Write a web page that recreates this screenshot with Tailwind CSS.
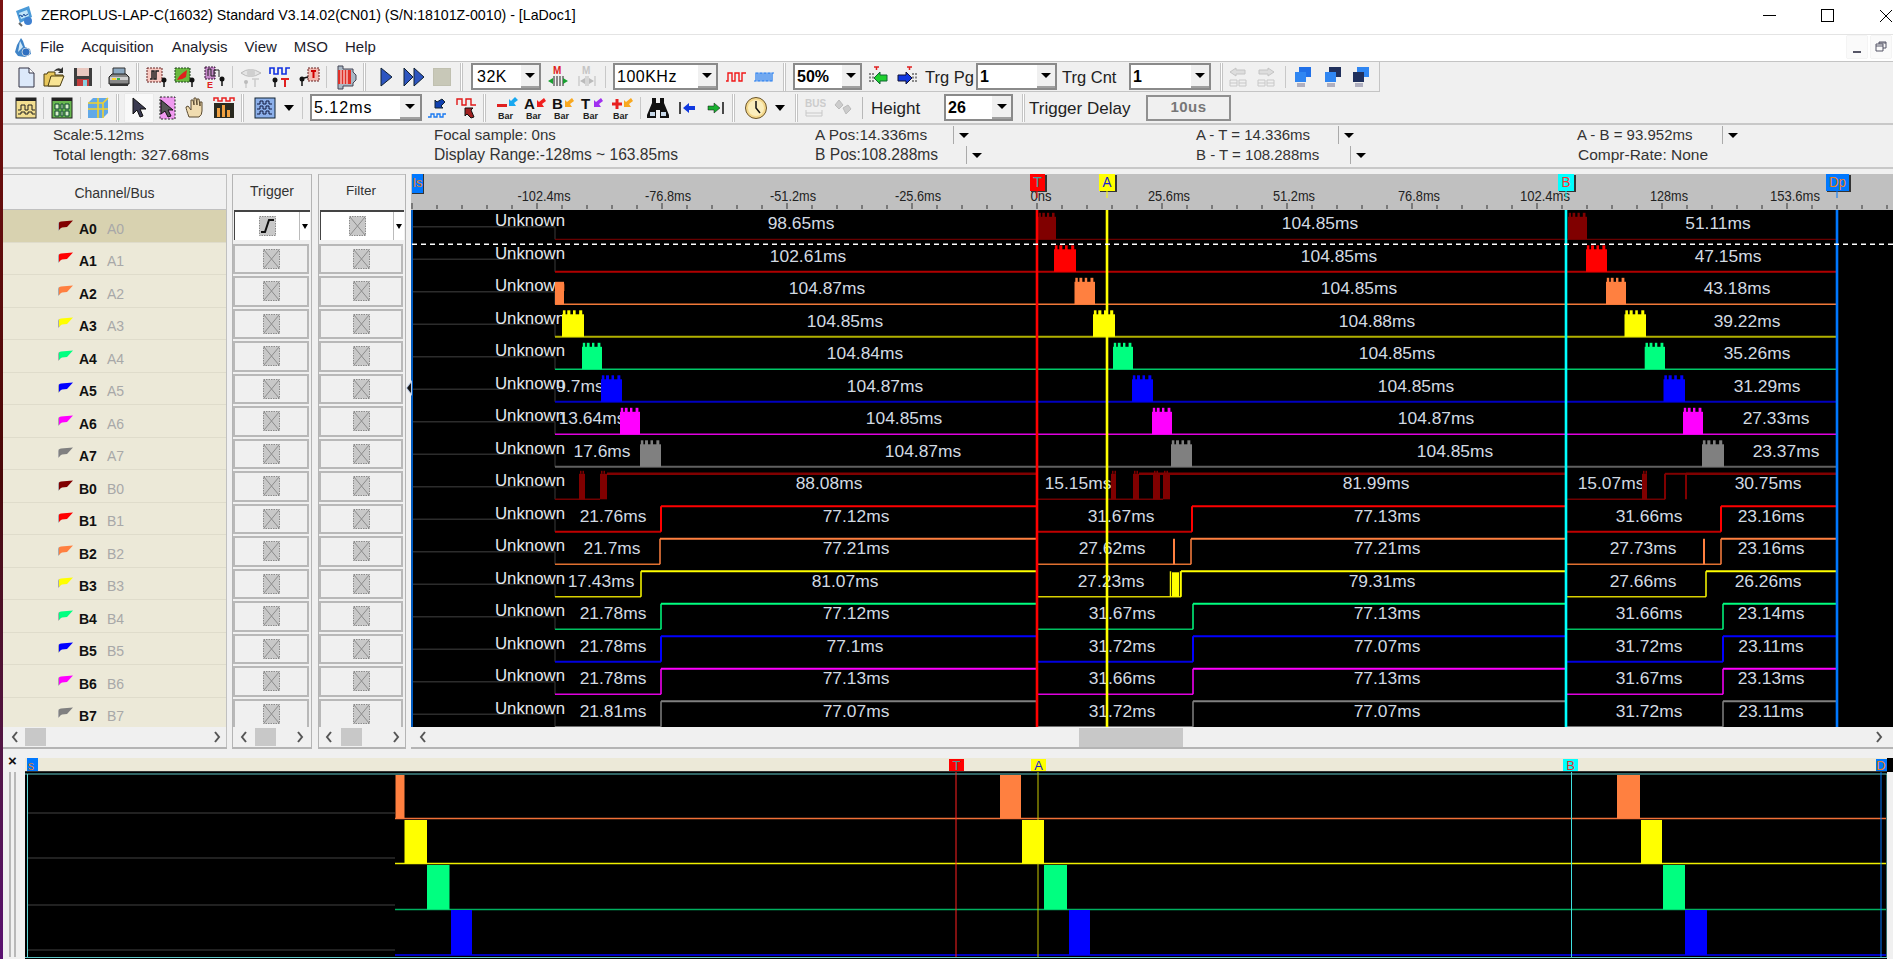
<!DOCTYPE html>
<html lang="en">
<head>
<meta charset="utf-8">
<title>ZEROPLUS-LAP-C</title>
<script src="https://cdn.jsdelivr.net/npm/@tailwindcss/browser@4"></script>
</head>
<body class="overflow-hidden bg-[#f0f0f0]">
<svg class="hidden" width="0" height="0"><defs>
<symbol id="xb" viewBox="0 0 17 20"><rect x=".5" y=".5" width="16" height="19" fill="#c8c8c8" stroke="#8a8a8a" stroke-dasharray="1.5 1"/><path d="M1 1l15 18M16 1L1 19" stroke="#8c8c8c" fill="none"/></symbol>
<symbol id="flag" viewBox="0 0 16 12"><path d="M1 4Q1 2 3 2L6 2 3 9 1 11z" fill="#aaa"/><path d="M2 3Q2 1.500 4 1.500L16 .5 10 7 5 7.500Q3 8 2 10z" fill="currentColor"/></symbol>
</defs></svg>
<div class="flex h-[959px] w-[1893px] overflow-hidden font-['Liberation_Sans',Arial,sans-serif] text-[#222]">
  <div class="h-full w-[3px] shrink-0 bg-linear-to-b from-[#7a1212] via-[#4a0808] to-[#5a1070]"></div>
  <div class="flex h-full w-[1890px] shrink-0 flex-col">

    <!-- title bar -->
    <div class="flex h-[35px] shrink-0 items-center border-b border-[#e4e4e4] bg-white">
      <svg class="ml-[11px] mt-[-2px] h-[22px] w-[22px]" viewBox="0 0 22 22"><path d="M2 6l13-5 3 11-12 6z" fill="#4a9ad8"/><path d="M5 8l8-3 2 6-8 3z" fill="#bfe4f8"/><path d="M5 11l2-1 1 2 2-3 1 2 3-2" stroke="#1c4f9c" fill="none"/><circle cx="14" cy="16" r="4" fill="#3d7fd0"/><path d="M5 18l3 3" stroke="#666" stroke-width="2"/></svg>
      <span class="ml-[5px] mt-[-2px] whitespace-nowrap text-[14.2px] text-black">ZEROPLUS-LAP-C(16032) Standard V3.14.02(CN01) (S/N:18101Z-0010) - [LaDoc1]</span>
      <div class="ml-auto flex h-full">
        <div class="flex w-[58px] items-center justify-center"><i class="mt-[-3px] block h-px w-[13px] bg-black"></i></div>
        <div class="flex w-[58px] items-center justify-center"><i class="mt-[-3px] block h-[13px] w-[13px] border border-black"></i></div>
        <div class="flex w-[37px] items-center"><svg class="ml-[23px] mt-[-3px] h-[14px] w-[14px]" viewBox="0 0 14 14"><path d="M1 1l12 12M13 1L1 13" stroke="#000" fill="none"/></svg></div>
      </div>
    </div>

    <!-- menu -->
    <div class="flex h-[26px] shrink-0 items-center bg-white pb-[2px] text-[15px] text-[#1c1c2c]">
      <svg class="ml-[10px] h-[21px] w-[20px]" viewBox="0 0 20 21"><path d="M8 1L4 8 2 15l3 4 7 1 6-3-1-5-5-2-2-6z" fill="#3f84c8"/><path d="M7 4l3 6-5 5z" fill="#cfe8f8"/><circle cx="13" cy="15" r="4" fill="#2f6fc0" stroke="#bcd" /></svg>
      <span class="ml-[7px]">File</span><span class="ml-[17px]">Acquisition</span><span class="ml-[18px]">Analysis</span><span class="ml-[17px]">View</span><span class="ml-[17px]">MSO</span><span class="ml-[17px]">Help</span>
      <div class="ml-auto mr-[2px] flex gap-[4px]">
        <div class="flex h-[22px] w-[20px] items-end justify-center bg-[#fafafa] pb-[5px] shadow-[0_0_1px_#bbb]"><i class="block h-[2px] w-[8px] bg-[#556]"></i></div>
        <div class="flex h-[22px] w-[20px] items-center justify-center bg-[#fafafa] shadow-[0_0_1px_#bbb]"><svg class="h-[12px] w-[12px]" viewBox="0 0 12 12"><path d="M4 3V1h7v6H8M1 3h7v7H1zM1 5h7M4 2h7" stroke="#556" fill="none"/></svg></div>
      </div>
    </div>

    <!-- toolbar 1 -->
    <div class="h-[31px] shrink-0 border-t border-[#c4c4c4]">
    <div class="flex h-[30px] w-[1377px] items-center border-r border-b border-[#c4c4c4] bg-[#f0f0f0] pl-[9px]">
      <div class="flex w-[28px] justify-center"><svg class="h-[24px] w-[24px]" viewBox="0 0 24 24"><path d="M5 3h10l5 5v14H5z" fill="#dce9fa" stroke="#334"/><path d="M15 3v5h5" fill="#fff" stroke="#334"/></svg></div>
      <div class="flex w-[28px] justify-center"><svg class="h-[24px] w-[24px]" viewBox="0 0 24 24"><path d="M2 21V9h3l1-2h7v3h8l-4 11z" fill="#e9c85c" stroke="#4a3c10"/><path d="M6 21l3-10h13l-4 10z" fill="#f8e494" stroke="#4a3c10"/><path d="M12 6q3-4 7-2l2-2v6h-5l2-2q-3-1-5 0" fill="#333"/></svg></div>
      <div class="ml-px flex w-[28px] justify-center"><svg class="h-[24px] w-[24px]" viewBox="0 0 24 24"><rect x="3" y="3" width="18" height="18" fill="#3e3e3e"/><rect x="6" y="3" width="12" height="8" fill="#e9c8c0"/><rect x="6" y="14" width="12" height="7" fill="#c43c3c"/><rect x="12" y="15" width="4" height="6" fill="#8cd0e0"/></svg></div>
      <i class="ml-[3px] block h-[22px] w-px bg-[#c8c8c8]"></i>
      <div class="ml-[4px] flex w-[28px] justify-center"><svg class="h-[24px] w-[24px]" viewBox="0 0 24 24"><path d="M6 11V3h12v8z" fill="#8ca8c0" stroke="#333"/><path d="M2 12l3-3h14l3 3v7H2z" fill="#888" stroke="#222"/><rect x="3" y="12" width="18" height="3" fill="#cfcfcf"/><rect x="5" y="13" width="4" height="2" fill="#ffd52e"/><rect x="10" y="13" width="3" height="2" fill="#37b34a"/><path d="M3 19h18v2H3z" fill="#333"/></svg></div>
      <i class="ml-[3px] block h-[28px] w-[3px] border-x border-[#c4c4c4] bg-white"></i>
      <div class="ml-[4px] flex w-[28px] justify-center"><svg class="h-[24px] w-[24px]" viewBox="0 0 24 24"><rect x="2" y="3" width="15" height="14" fill="#f8c8c0" stroke="#622" stroke-dasharray="2 1"/><path d="M5 14h2V6h2v8h2V6h3" stroke="#222" fill="none" stroke-width="1.500"/><circle cx="19" cy="15" r="2.500" fill="#111"/><path d="M19 16v6" stroke="#111" stroke-width="1.500"/></svg></div>
      <div class="flex w-[28px] justify-center"><svg class="h-[24px] w-[24px]" viewBox="0 0 24 24"><rect x="2" y="3" width="15" height="14" fill="#69b93e" stroke="#242" stroke-dasharray="2 1"/><path d="M4 15q3-6 10-10l-1 7q-4 3-9 3z" fill="#e0201c"/><circle cx="19" cy="15" r="2.500" fill="#111"/><path d="M19 16v6" stroke="#111" stroke-width="1.500"/></svg></div>
      <div class="ml-[2px] flex w-[28px] justify-center"><svg class="h-[24px] w-[24px]" viewBox="0 0 24 24"><rect x="2" y="2" width="10" height="12" fill="#c488c8" stroke="#313" stroke-dasharray="2 1"/><path d="M5 11V4h3v7h3V5h5v7" stroke="#222" fill="none"/><circle cx="19" cy="14" r="2.500" fill="#111"/><path d="M19 15v6" stroke="#111" stroke-width="1.500"/><text x="4" y="23" font-size="9" font-weight="700" fill="#e02020">E</text></svg></div>
      <i class="ml-[3px] block h-[22px] w-px bg-[#c8c8c8]"></i>
      <div class="ml-[4px] flex w-[28px] justify-center"><svg class="h-[24px] w-[24px]" viewBox="0 0 24 24"><path d="M2 8q9-7 20 0-11 7-20 0z" fill="#e4e4e4" stroke="#bbb"/><circle cx="12" cy="8" r="4" fill="#cfcfcf"/><circle cx="7" cy="17" r="2" fill="#bbb"/><path d="M7 17v6" stroke="#bbb"/><path d="M13 14h7M16 14v8" stroke="#ccc" stroke-width="1.500" fill="none"/></svg></div>
      <div class="ml-px flex w-[28px] justify-center"><svg class="h-[24px] w-[24px]" viewBox="0 0 24 24"><path d="M2 9V3h4v6h4V3h4v6h4V3h4" stroke="#1030e0" stroke-width="1.600" fill="none"/><circle cx="7" cy="15" r="2.500" fill="#111"/><path d="M7 15v7" stroke="#111" stroke-width="1.500"/><path d="M13 14h8M17 14v8" stroke="#e02020" stroke-width="2" fill="none"/></svg></div>
      <div class="flex w-[28px] justify-center"><svg class="h-[24px] w-[24px]" viewBox="0 0 24 24"><rect x="12" y="3" width="11" height="13" fill="#f2b8b0" stroke="#622" stroke-dasharray="2 1"/><path d="M15 6h5M17.500 6v7" stroke="#d00000" stroke-width="2" fill="none"/><circle cx="6" cy="14" r="2.500" fill="#111"/><path d="M6 15v6M8 13l4-1" stroke="#111" stroke-width="1.500"/></svg></div>
      <i class="ml-[4px] block h-[22px] w-px bg-[#c8c8c8]"></i>
      <div class="ml-[5px] flex w-[28px] justify-center"><svg class="h-[26px] w-[26px]" viewBox="0 0 26 26"><path d="M5 2h5v3h10v3l3 3v5l-3 3v3H10v3H5z" fill="#aab8c4" stroke="#445"/><rect x="5" y="6" width="13" height="14" fill="#e03028"/><path d="M8 6v14M11 6v14M14 6v14" stroke="#fff"/></svg></div>
      <i class="ml-[3px] block h-[28px] w-[3px] border-x border-[#c4c4c4] bg-white"></i>
      <div class="ml-[6px] flex w-[28px] justify-center"><svg class="h-[20px] w-[16px]" viewBox="0 0 16 20"><path d="M3 1l11 9-11 9z" fill="#2d55c0" stroke="#123"/></svg></div>
      <div class="flex w-[28px] justify-center"><svg class="h-[20px] w-[24px]" viewBox="0 0 24 20"><path d="M2 1l9 9-9 9zM12 1l10 9-10 9z" fill="#2d55c0" stroke="#123"/></svg></div>
      <div class="flex w-[28px] justify-center"><i class="block h-[18px] w-[18px] border border-[#c0c0b0] bg-[#c8c8b8]"></i></div>
      <i class="ml-[4px] block h-[28px] w-[3px] border-x border-[#c4c4c4] bg-white"></i>
      <div class="ml-[8px] flex h-[27px] w-[70px] items-center border-2 border-[#8a8a8a] bg-white"><span class="ml-[4px] text-[16px] tracking-[.5px] text-black">32K</span><div class="ml-auto flex h-full w-[18px] items-center justify-center border-b-2 border-[#a0a0a0] bg-[#f0f0f0]"><i class="block border-x-[5px] border-t-[5px] border-x-transparent border-t-black"></i></div></div>
      <div class="ml-[3px] flex w-[28px] justify-center"><svg class="h-[24px] w-[24px]" viewBox="0 0 24 24"><text x="7" y="9" font-size="10" font-weight="700" fill="#e02020">M</text><path d="M8 11v10M11 11v10M14 11v10M17 11v10" stroke="#222"/><path d="M2 16l5-3v6zM22 16l-5-3v6z" fill="#18a030"/></svg></div>
      <div class="ml-[1px] flex w-[28px] justify-center"><svg class="h-[24px] w-[24px]" viewBox="0 0 24 24"><text x="7" y="9" font-size="10" font-weight="700" fill="#c4c4c4">M</text><path d="M4 11v10M20 11v10M11 11v10M13 11v10" stroke="#bbb"/><path d="M5 16l5-3v6zM19 16l-5-3v6z" fill="#bbb"/></svg></div>
      <i class="ml-[4px] block h-[22px] w-px bg-[#c8c8c8]"></i>
      <div class="ml-[7px] flex h-[27px] w-[105px] items-center border-2 border-[#8a8a8a] bg-white"><span class="ml-[2px] text-[16px] tracking-[.5px] text-black">100KHz</span><div class="ml-auto flex h-full w-[18px] items-center justify-center border-b-2 border-[#a0a0a0] bg-[#f0f0f0]"><i class="block border-x-[5px] border-t-[5px] border-x-transparent border-t-black"></i></div></div>
      <div class="ml-[4px] flex w-[28px] justify-center"><svg class="h-[14px] w-[20px]" viewBox="0 0 20 14"><path d="M0 11h2V3h4v8h3V3h4v8h3V3h4" stroke="#f01818" stroke-width="1.400" fill="none"/></svg></div>
      <div class="flex w-[28px] justify-center"><svg class="h-[14px] w-[20px]" viewBox="0 0 20 14"><path d="M0 11h2V3h2v8h2V3h2v8h2V3h2v8h2V3h2v8h2V3h2" stroke="#1c78f0" stroke-width="1.200" fill="none"/></svg></div>
      <i class="ml-[5px] block h-[28px] w-[3px] border-x border-[#c4c4c4] bg-white"></i>
      <div class="ml-[7px] flex h-[27px] w-[69px] items-center border-2 border-[#8a8a8a] bg-white"><span class="ml-[2px] text-[16px] font-bold text-black">50%</span><div class="ml-auto flex h-full w-[18px] items-center justify-center border-b-2 border-[#a0a0a0] bg-[#f0f0f0]"><i class="block border-x-[5px] border-t-[5px] border-x-transparent border-t-black"></i></div></div>
      <div class="ml-[2px] flex w-[28px] justify-center"><svg class="h-[24px] w-[24px]" viewBox="0 0 24 24"><path d="M8 2h5M10.500 2v3" stroke="#e02020" stroke-width="1.500"/><path d="M4 8v10M7 8v10" stroke="#222" stroke-dasharray="2 1.500"/><path d="M8 13l6-6v3h7v6h-7v3z" fill="#20d030" stroke="#163"/></svg></div>
      <div class="ml-px flex w-[28px] justify-center"><svg class="h-[24px] w-[24px]" viewBox="0 0 24 24"><path d="M12 2h5M14.500 2v3" stroke="#e02020" stroke-width="1.500"/><path d="M18 8v10M21 8v10" stroke="#222" stroke-dasharray="2 1.500"/><path d="M17 13l-6-6v3H3v6h8v3z" fill="#1038e0" stroke="#113"/></svg></div>
      <span class="ml-[4px] mt-[2px] w-[51px] whitespace-nowrap text-[16.5px]">Trg Pg</span>
      <div class="flex h-[27px] w-[81px] items-center border-2 border-[#8a8a8a] bg-white"><span class="ml-[2px] text-[16px] font-bold text-black">1</span><div class="ml-auto flex h-full w-[18px] items-center justify-center border-b-2 border-[#a0a0a0] bg-[#f0f0f0]"><i class="block border-x-[5px] border-t-[5px] border-x-transparent border-t-black"></i></div></div>
      <span class="ml-[5px] mt-[2px] w-[56px] whitespace-nowrap text-[16.5px]">Trg Cnt</span>
      <div class="ml-[11px] flex h-[27px] w-[82px] items-center border-2 border-[#8a8a8a] bg-white"><span class="ml-[2px] text-[16px] font-bold text-black">1</span><div class="ml-auto flex h-full w-[18px] items-center justify-center border-b-2 border-[#a0a0a0] bg-[#f0f0f0]"><i class="block border-x-[5px] border-t-[5px] border-x-transparent border-t-black"></i></div></div>
      <i class="ml-[9px] block h-[28px] w-[3px] border-x border-[#c4c4c4] bg-white"></i>
      <div class="ml-px flex w-[28px] justify-center"><svg class="h-[22px] w-[22px]" viewBox="0 0 22 22"><path d="M3 6l6-4v2h9v4H9v2z" fill="#ddd" stroke="#c4c4c4"/><path d="M3 14h7v6H3zM12 14h7v6h-7zM3 17h7M12 17h7" stroke="#c8c8c8" fill="none"/></svg></div>
      <div class="flex w-[28px] justify-center"><svg class="h-[22px] w-[22px]" viewBox="0 0 22 22"><path d="M19 6l-6-4v2H4v4h9v2z" fill="#ddd" stroke="#c4c4c4"/><path d="M3 14h7v6H3zM12 14h7v6h-7zM3 17h7M12 17h7" stroke="#c8c8c8" fill="none"/></svg></div>
      <i class="ml-[5px] block h-[22px] w-px bg-[#c8c8c8]"></i>
      <div class="ml-[3px] flex w-[28px] justify-center"><svg class="h-[22px] w-[18px]" viewBox="0 0 18 22"><rect x="5" y="1" width="12" height="10" fill="#2070e8"/><rect x="1" y="6" width="11" height="10" fill="#2f86f2"/><path d="M3 17h8v4H3z" fill="#b0b0c0"/></svg></div>
      <div class="ml-[2px] flex w-[28px] justify-center"><svg class="h-[22px] w-[18px]" viewBox="0 0 18 22"><rect x="5" y="1" width="12" height="10" fill="#20305c"/><rect x="1" y="6" width="11" height="10" fill="#2f86f2"/><path d="M3 17h8v4H3z" fill="#b0b0c0"/></svg></div>
      <div class="flex w-[28px] justify-center"><svg class="h-[22px] w-[18px]" viewBox="0 0 18 22"><rect x="5" y="1" width="12" height="10" fill="#2f86f2"/><rect x="1" y="6" width="11" height="10" fill="#20305c"/><path d="M3 17h8v4H3z" fill="#b0b0c0"/></svg></div>
    </div></div>

    <!-- toolbar 2 -->
    <div class="flex h-[31px] shrink-0 items-center bg-[#f0f0f0] pl-[9px]">
      <div class="flex w-[28px] justify-center"><svg class="h-[24px] w-[24px]" viewBox="0 0 24 24"><rect x="2" y="2" width="20" height="20" fill="#f2de90" stroke="#222"/><rect x="2" y="2" width="20" height="3" fill="#222"/><path d="M4 14h3V9h4v5h3V9h4v5h3M4 18h3v-2h4v2h3v-2h4v2h3" stroke="#222" fill="none"/></svg></div>
      <i class="ml-[3px] block h-[22px] w-px bg-[#c8c8c8]"></i>
      <div class="ml-[4px] flex w-[28px] justify-center"><svg class="h-[24px] w-[24px]" viewBox="0 0 24 24"><rect x="2" y="2" width="20" height="20" fill="#68b850" stroke="#222"/><rect x="2" y="2" width="20" height="3" fill="#222"/><path d="M5 8h4v5H5zM11 8h2v5h-2zM15 8h4v5h-4zM5 15h4v5H5zM11 15h2v5h-2zM15 15h4v5h-4z" fill="#d8f0c8" stroke="#143"/></svg></div>
      <i class="ml-[4px] block h-[22px] w-px bg-[#c8c8c8]"></i>
      <div class="ml-[3px] flex w-[28px] justify-center"><svg class="h-[24px] w-[24px]" viewBox="0 0 24 24"><path d="M2 7l5-5h15v15l-5 5H2z" fill="#60a8e8"/><path d="M2 13h20M12 2v20M2 7h15v15M17 7l5-5" stroke="#f0d030" stroke-width="1.600" fill="none"/></svg></div>
      <i class="ml-[4px] block h-[28px] w-[3px] border-x border-[#c4c4c4] bg-white"></i>
      <div class="ml-[6px] flex h-[28px] w-[28px] items-center justify-center bg-[#f9f9f9] shadow-[0_0_1px_#ccc]"><svg class="h-[22px] w-[16px]" viewBox="0 0 16 22"><path d="M2 1v16l4-4 3 7 3-1-3-7h6z" fill="#3a3a50" stroke="#111"/></svg></div>
      <div class="flex w-[28px] justify-center"><svg class="h-[24px] w-[24px]" viewBox="0 0 24 24"><rect x="5" y="1" width="15" height="22" fill="#f09af0" stroke="#222" stroke-dasharray="2 1.500"/><path d="M6 4v14l4-3 3 6 3-1-3-6h5z" fill="#555" stroke="#111"/></svg></div>
      <div class="ml-px flex w-[28px] justify-center"><svg class="h-[24px] w-[24px]" viewBox="0 0 24 24"><path d="M5 21Q2 13 2 11l2-1 3 4V4h2l1 5V2h2l1 7V3h2l1 7V6h2v9q0 4-3 6z" fill="#f0dcb0" stroke="#5a4a30"/></svg></div>
      <div class="flex w-[28px] justify-center"><svg class="h-[24px] w-[24px]" viewBox="0 0 24 24"><path d="M2 5V2h4v3h4V2h4v3h4V2h4v3" stroke="#e82020" stroke-width="1.500" fill="none"/><rect x="2" y="7" width="20" height="15" fill="#2a2a20"/><path d="M5 21h3V12H5zM10 21h3V9h-3zM15 21h3v-7h-3z" fill="#f0a040"/></svg></div>
      <i class="ml-[3px] block h-[28px] w-[3px] border-x border-[#c4c4c4] bg-white"></i>
      <div class="ml-[7px] flex w-[28px] justify-center"><svg class="h-[24px] w-[24px]" viewBox="0 0 24 24"><rect x="2" y="2" width="20" height="20" fill="#8cb0ea" stroke="#123"/><path d="M4 8h3V5h3v3h3V5h3v3h3M4 13h3v-3h3v3h3v-3h3v3h3M4 18h3v-3h3v3h3v-3h3v3h3" stroke="#121a40" fill="none"/></svg></div>
      <div class="flex w-[20px] justify-center"><i class="block border-x-[5px] border-t-[6px] border-x-transparent border-t-black"></i></div>
      <i class="ml-[3px] block h-[22px] w-px bg-[#c8c8c8]"></i>
      <div class="ml-[7px] flex h-[27px] w-[112px] items-center border-2 border-[#8a8a8a] bg-white"><span class="ml-[2px] text-[16px] tracking-[1px] text-black">5.12ms</span><div class="ml-auto flex h-full w-[20px] items-center justify-center border-b-2 border-[#a0a0a0] bg-[#f0f0f0]"><i class="block border-x-[5px] border-t-[5px] border-x-transparent border-t-black"></i></div></div>
      <div class="ml-[2px] flex w-[28px] justify-center"><svg class="h-[24px] w-[24px]" viewBox="0 0 24 24"><path d="M2 21h3v-3h3v3h3v-3h3v3h3v-3h3" stroke="#1878f0" stroke-width="1.300" fill="none"/><path d="M16 3l3 3-4 4 2 2h-8V4l2 2z" fill="#1040b0" stroke="#123"/></svg></div>
      <div class="ml-px flex w-[28px] justify-center"><svg class="h-[24px] w-[24px]" viewBox="0 0 24 24"><path d="M2 9V3h5v6h4V3h5v6h5" stroke="#e01818" stroke-width="1.400" fill="none"/><path d="M19 21l-3 1-4-4-2 2v-8h8l-2 2z" fill="#a02020" stroke="#111"/></svg></div>
      <i class="ml-[2px] block h-[28px] w-[3px] border-x border-[#c4c4c4] bg-white"></i>
      <div class="ml-[7px] flex w-[28px] justify-center"><svg class="h-[26px] w-[24px]" viewBox="0 0 24 26"><path d="M2 9h10v3H2z" fill="#e02020"/><path d="M20 2l3 3-4 3 2 3h-7V4l2 2z" fill="#18a8f0"/><text x="3" y="24" font-size="9" fill="#222" font-weight="700">Bar</text></svg></div>
      <div class="flex w-[28px] justify-center"><svg class="h-[26px] w-[24px]" viewBox="0 0 24 26"><text x="1" y="14" font-size="15" font-weight="700" fill="#111">A</text><path d="M21 3l2 3-4 3 2 3h-7V5l2 2z" fill="#f02020"/><text x="3" y="24" font-size="9" fill="#222" font-weight="700">Bar</text></svg></div>
      <div class="flex w-[28px] justify-center"><svg class="h-[26px] w-[24px]" viewBox="0 0 24 26"><text x="1" y="14" font-size="15" font-weight="700" fill="#111">B</text><path d="M21 3l2 3-4 3 2 3h-7V5l2 2z" fill="#f8a820"/><text x="3" y="24" font-size="9" fill="#222" font-weight="700">Bar</text></svg></div>
      <div class="ml-px flex w-[28px] justify-center"><svg class="h-[26px] w-[24px]" viewBox="0 0 24 26"><text x="1" y="14" font-size="15" font-weight="700" fill="#111">T</text><path d="M21 3l2 3-4 3 2 3h-7V5l2 2z" fill="#a030f0"/><text x="3" y="24" font-size="9" fill="#222" font-weight="700">Bar</text></svg></div>
      <div class="ml-[2px] flex w-[28px] justify-center"><svg class="h-[26px] w-[24px]" viewBox="0 0 24 26"><path d="M2 9h10M7 4v10" stroke="#e82020" stroke-width="3"/><path d="M21 3l2 3-4 3 2 3h-7V5l2 2z" fill="#f8a820"/><text x="3" y="24" font-size="9" fill="#222" font-weight="700">Bar</text></svg></div>
      <i class="ml-[4px] block h-[22px] w-px bg-[#c8c8c8]"></i>
      <div class="ml-[3px] flex w-[28px] justify-center"><svg class="h-[22px] w-[24px]" viewBox="0 0 24 22"><path d="M6 1h4v5h4V1h4v5l5 12v3h-9v-8h-4v8H1v-3L6 6z" fill="#111"/><path d="M4 15h5v4H4zM15 15h5v4h-5z" fill="#c8d8e8"/></svg></div>
      <div class="ml-px flex w-[28px] justify-center"><svg class="h-[18px] w-[18px]" viewBox="0 0 18 18"><path d="M2 3v12" stroke="#111" stroke-width="1.500"/><path d="M5 9l6-5v3h6v4h-6v3z" fill="#1038e0"/></svg></div>
      <div class="ml-px flex w-[28px] justify-center"><svg class="h-[18px] w-[18px]" viewBox="0 0 18 18"><path d="M16 3v12" stroke="#111" stroke-width="1.500"/><path d="M13 9L7 4v3H1v4h6v3z" fill="#18b030" stroke="#111" stroke-width=".5"/></svg></div>
      <i class="ml-[2px] block h-[28px] w-[3px] border-x border-[#c4c4c4] bg-white"></i>
      <div class="ml-[7px] flex w-[28px] justify-center"><svg class="h-[24px] w-[24px]" viewBox="0 0 24 24"><circle cx="12" cy="12" r="10.500" fill="#f4d88c" stroke="#6a5428"/><circle cx="12" cy="12" r="8" fill="#fbeebc"/><path d="M12 5v7l4 5" stroke="#111" stroke-width="1.500" fill="none"/></svg></div>
      <div class="flex w-[20px] justify-center"><i class="block border-x-[5px] border-t-[6px] border-x-transparent border-t-black"></i></div>
      <i class="ml-[5px] block h-[28px] w-[3px] border-x border-[#c4c4c4] bg-white"></i>
      <div class="ml-[2px] flex w-[28px] justify-center"><svg class="h-[24px] w-[24px]" viewBox="0 0 24 24"><text x="3" y="11" font-size="10" font-weight="700" fill="#ccc">BUS</text><path d="M4 14v6M20 14v6M4 17h16M4 20h16" stroke="#c8c8c8" fill="none"/></svg></div>
      <div class="ml-px flex w-[28px] justify-center"><svg class="h-[24px] w-[24px]" viewBox="0 0 24 24"><path d="M4 9l4-5 4 5-4 4zM12 12l5-3 3 4-5 5z" fill="#ccc" stroke="#bbb"/></svg></div>
      <i class="ml-[5px] block h-[22px] w-px bg-[#b8b8b8]"></i>
      <span class="ml-[8px] mt-[2px] w-[50px] text-[17px]">Height</span>
      <div class="ml-[23px] flex h-[27px] w-[69px] items-center border-2 border-[#8a8a8a] bg-white"><span class="ml-[2px] text-[16px] font-bold text-black">26</span><div class="ml-auto flex h-full w-[19px] items-center justify-center border-b-2 border-[#a0a0a0] bg-[#f0f0f0]"><i class="block border-x-[5px] border-t-[5px] border-x-transparent border-t-black"></i></div></div>
      <i class="ml-[9px] block h-[28px] w-[3px] border-x border-[#c4c4c4] bg-white"></i>
      <span class="ml-[4px] mt-[2px] w-[105px] whitespace-nowrap text-[17px]">Trigger Delay</span>
      <div class="ml-[12px] flex h-[26px] w-[85px] items-center justify-center border-2 border-[#909090] bg-[#f0f0f0] text-[15px] font-bold tracking-[.5px] text-[#777]">10us</div>
    </div>

    <!-- info -->
    <div class="grid h-[46px] shrink-0 grid-cols-[381px_381px_381px_381px_381px] border-y-2 border-[#c8c8c8] bg-[#f0f0f0] pl-[50px] text-[15px] leading-[20px] text-[#333]">
      <div><div>Scale:5.12ms</div><div class="text-[15.5px]">Total length: 327.68ms</div></div>
      <div><div>Focal sample: 0ns</div><div class="text-[15.6px]">Display Range:-128ms ~ 163.85ms</div></div>
      <div>
        <div class="flex items-center"><span class="w-[138px] text-[15.4px]">A Pos:14.336ms</span><i class="block h-[18px] w-px bg-[#aaa]"></i><i class="ml-[5px] block border-x-[5px] border-t-[5px] border-x-transparent border-t-black"></i></div>
        <div class="flex items-center"><span class="w-[151px] text-[15.6px]">B Pos:108.288ms</span><i class="block h-[18px] w-px bg-[#aaa]"></i><i class="ml-[5px] block border-x-[5px] border-t-[5px] border-x-transparent border-t-black"></i></div>
      </div>
      <div>
        <div class="flex items-center"><span class="w-[142px]">A - T = 14.336ms</span><i class="block h-[18px] w-px bg-[#aaa]"></i><i class="ml-[5px] block border-x-[5px] border-t-[5px] border-x-transparent border-t-black"></i></div>
        <div class="flex items-center"><span class="w-[154px]">B - T = 108.288ms</span><i class="block h-[18px] w-px bg-[#aaa]"></i><i class="ml-[5px] block border-x-[5px] border-t-[5px] border-x-transparent border-t-black"></i></div>
      </div>
      <div>
        <div class="flex items-center"><span class="w-[145px]">A - B = 93.952ms</span><i class="block h-[18px] w-px bg-[#aaa]"></i><i class="ml-[5px] block border-x-[5px] border-t-[5px] border-x-transparent border-t-black"></i></div>
        <div class="ml-px text-[15.5px]">Compr-Rate: None</div>
      </div>
    </div>
    <div class="h-[5px] shrink-0 bg-[#f0f0f0]"></div>

    <!-- main panels -->
    <div class="flex h-[575px] shrink-0 bg-[#f0f0f0]">
      <div class="flex w-[224px] shrink-0 flex-col border-b-2 border-[#b4b4b4]">
        <div class="flex h-[36px] shrink-0 items-center justify-center border-y border-r border-[#c0c0c0] pt-[2px] text-[14px] text-[#333]">Channel/Bus</div>
        <div id="chan" class="h-[517px] shrink-0 overflow-hidden border-r border-[#c0c0c0] bg-[#ece9d8]"></div>
        <div class="flex flex-1 items-center border-r border-[#c0c0c0] pl-[8px] text-[#555]"><svg class="h-[12px] w-[8px]" viewBox="0 0 8 12"><path d="M6 1L2 6l4 5" stroke="#555" stroke-width="2" fill="none"/></svg><i class="ml-[6px] block h-[18px] w-[21px] bg-[#c8c8c8]"></i><svg class="ml-[167px] h-[12px] w-[8px]" viewBox="0 0 8 12"><path d="M2 1l4 5-4 5" stroke="#555" stroke-width="2" fill="none"/></svg></div>
      </div>
      <div class="ml-[5px] flex w-[80px] shrink-0 flex-col border-b-2 border-x border-[#b4b4b4]">
        <div class="flex h-[36px] shrink-0 items-center justify-center border-t border-[#c0c0c0] pb-[2px] text-[14px] text-[#333]">Trigger</div>
        <div id="trig" class="h-[517px] shrink-0 overflow-hidden"></div>
        <div class="flex flex-1 items-center pl-[7px]"><svg class="h-[12px] w-[8px]" viewBox="0 0 8 12"><path d="M6 1L2 6l4 5" stroke="#555" stroke-width="2" fill="none"/></svg><i class="ml-[7px] block h-[18px] w-[21px] bg-[#c8c8c8]"></i><svg class="ml-[20px] h-[12px] w-[8px]" viewBox="0 0 8 12"><path d="M2 1l4 5-4 5" stroke="#555" stroke-width="2" fill="none"/></svg></div>
      </div>
      <div class="ml-[6px] flex w-[88px] shrink-0 flex-col border-b-2 border-x border-[#b4b4b4]">
        <div class="flex h-[36px] shrink-0 items-center justify-center border-t border-[#c0c0c0] pb-[2px] pr-[2px] text-[13.5px] text-[#333]">Filter</div>
        <div id="filt" class="h-[517px] shrink-0 overflow-hidden"></div>
        <div class="flex flex-1 items-center pl-[6px]"><svg class="h-[12px] w-[8px]" viewBox="0 0 8 12"><path d="M6 1L2 6l4 5" stroke="#555" stroke-width="2" fill="none"/></svg><i class="ml-[8px] block h-[18px] w-[21px] bg-[#c8c8c8]"></i><svg class="ml-[30px] h-[12px] w-[8px]" viewBox="0 0 8 12"><path d="M2 1l4 5-4 5" stroke="#555" stroke-width="2" fill="none"/></svg></div>
      </div>
      <div class="relative ml-[5px] flex w-[1482px] shrink-0 flex-col border-b-2 border-[#b4b4b4]">
        <svg id="wave" class="block h-[553px] w-[1482px] shrink-0" viewBox="411 174 1482 553" font-family="'Liberation Sans',Arial,sans-serif"></svg>
        <div class="flex flex-1 items-center bg-[#f0f0f0] pl-[8px]"><svg class="h-[12px] w-[8px]" viewBox="0 0 8 12"><path d="M6 1L2 6l4 5" stroke="#555" stroke-width="2" fill="none"/></svg><i class="ml-[652px] block h-[19px] w-[104px] bg-[#c8c8c8]"></i><svg class="ml-[692px] h-[12px] w-[8px]" viewBox="0 0 8 12"><path d="M2 1l4 5-4 5" stroke="#555" stroke-width="2" fill="none"/></svg></div>
        <svg class="absolute left-[-5px] top-[206px] h-[16px] w-[6px]" viewBox="0 0 6 16"><path d="M6 0v16L0 8z" fill="#b8c8e4"/><path d="M5 3v10L1 8z" fill="#111"/></svg>
      </div>
    </div>

    <!-- overview panel -->
    <div class="flex h-[210px] shrink-0 bg-[#f0f0f0]">
      <div class="flex w-[22px] shrink-0 flex-col">
        <span class="ml-[5px] mt-[2px] text-[15px] font-bold leading-[20px] text-[#111]">×</span>
        <div class="ml-[6px] mt-px flex h-[185px] gap-[3px]"><i class="block h-full w-[2px] bg-[#b8b8b8]"></i><i class="block h-full w-[2px] bg-[#b8b8b8]"></i></div>
      </div>
      <div class="flex w-[1868px] flex-col pt-[9px]">
        <svg id="over" class="block h-[201px] w-[1868px]" viewBox="25 758 1868 201" font-family="'Liberation Sans',Arial,sans-serif"></svg>
      </div>
    </div>
  </div>
</div>
<script>
const names=['A0','A1','A2','A3','A4','A5','A6','A7','B0','B1','B2','B3','B4','B5','B6','B7'];
const full=['#800000','#ff0000','#ff8040','#ffff00','#00ff80','#0000ff','#ff00ff','#808080','#800000','#ff0000','#ff8040','#ffff00','#00ff80','#0000ff','#ff00ff','#808080'];
const dim=['#800000','#b00000','#f07838','#b0b000','#00c868','#0000c0','#e000e0','#606060','#700000','#c00000','#e07030','#d8d000','#00c060','#0000e0','#e000e0','#707070'];
const wid=[1,2,1.5,2,1.5,2,1.5,2,1.5,2,1.5,1.5,1.5,2,1.5,1.5];
document.getElementById('chan').innerHTML=names.map((n,i)=>`<div class="flex h-[32.5px] items-center border-b border-[#dfdccb] pl-[54px] pt-[7px] text-[14px] ${i===0?'bg-[#d8d2b0]':''}"><svg class="mt-[-7px] h-[12px] w-[16px]" style="color:${full[i]}"><use href="#flag"/></svg><b class="ml-[6px] w-[28px] font-bold text-[#111]">${n}</b><span class="text-[#a8a8a8]">${n}</span></div>`).join('');
const xIcon='<svg class="h-[20px] w-[17px]"><use href="#xb"/></svg>';
const ddSel='<div class="flex h-[30px] items-center border-t-2 border-l border-[#444] bg-white"><div class="flex h-full flex-1 items-center justify-center">ICON</div><div class="flex h-full w-[11px] items-center justify-center border-l border-[#bbb]"><i class="block border-x-[3px] border-t-[5px] border-x-transparent border-t-black"></i></div></div>';
const edge='<svg class="h-[20px] w-[17px]" viewBox="0 0 17 20"><rect x=".5" y=".5" width="16" height="19" fill="#c8c8c8" stroke="#8a8a8a" stroke-dasharray="1.5 1"/><path d="M2 16h4l4-12h5" stroke="#111" stroke-width="2" fill="none"/></svg>';
function cells(firstIcon){return names.map((n,i)=>i===0?`<div class="h-[32.5px] px-px pb-[2px]">${ddSel.replace('ICON',firstIcon)}</div>`:`<div class="h-[32.5px] pr-[2px] py-px"><div class="flex h-[30.5px] items-center justify-center border-2 border-[#b8b8b8] bg-[#f0f0f0]">${xIcon}</div></div>`).join('');}
document.getElementById('trig').innerHTML=cells(edge);
document.getElementById('filt').innerHTML=cells(xIcon);

/* waveform canvas */
let s='';
const L=(a,b,c,d,col,w)=>{s+=`<path d="M${a} ${b}L${c} ${d}" stroke="${col}" stroke-width="${w}" fill="none"/>`};
const R=(x,y,w,h,c)=>{s+=`<rect x="${x}" y="${y}" width="${w}" height="${h}" fill="${c}"/>`};
const T=(x,y,txt,fill,size,anchor,extra)=>{s+=`<text x="${x}" y="${y}" fill="${fill}" font-size="${size}" text-anchor="${anchor||'middle'}" ${extra||''}>${txt}</text>`};
const Y=i=>239.3+32.5*i;
R(411,174,1482,36,'#c0c0c0');R(411,210,1482,517,'#000');
for(let x=412;x<1893;x+=25){const k=(x-1037)/25;const maj=k%5===0;L(x,maj?203:205,x,209,'#333',1)}
[['-102.4ms',544,53],['-76.8ms',668,46],['-51.2ms',793,46],['-25.6ms',918,46],['0ns',1041,21],['25.6ms',1169,42],['51.2ms',1294,42],['76.8ms',1419,42],['102.4ms',1545,50],['128ms',1669,38],['153.6ms',1795,50]].forEach(r=>T(r[1],201,r[0],'#222',15,'middle',`textLength="${r[2]}" lengthAdjust="spacingAndGlyphs"`));
const teeth=(x0,x1,b,c)=>{const w=x1-x0;[[.04,.12],[.24,.14],[.5,.12],[.78,.14]].forEach(t=>{if(w>=12)R(x0+w*t[0],b-26.5,w*t[1],5,c)})};
const P=(x0,x1,i,h)=>{const b=Y(i),c=full[i];R(x0,b-(h||22.5),x1-x0,(h||22.5),c);teeth(x0,x1,b,c)};
const hi=i=>Y(i)-25.5;
const trig=[
 [null,[1038,1056],[1568,1587]],[null,[1054,1076],[1586,1607]],[[555,564],[1074.5,1095],[1606,1626]],[[562,584],[1093,1115],[1624.5,1646]],
 [[582,602],[1113,1133],[1644.7,1665]],[[601,622],[1132,1153],[1663.5,1685]],[[620,640],[1152,1172],[1683,1703]],[[640,661],[1171,1192],[1702,1724]]];
const aLab=[[[801,'98.65ms'],[1320,'104.85ms'],[1718,'51.11ms']],[[808,'102.61ms'],[1339,'104.85ms'],[1728,'47.15ms']],[[827,'104.87ms'],[1359,'104.85ms'],[1737,'43.18ms']],[[845,'104.85ms'],[1377,'104.88ms'],[1747,'39.22ms']],[[865,'104.84ms'],[1397,'104.85ms'],[1757,'35.26ms']],[[580,'9.7ms'],[885,'104.87ms'],[1416,'104.85ms'],[1767,'31.29ms']],[[592,'13.64ms'],[904,'104.85ms'],[1436,'104.87ms'],[1776,'27.33ms']],[[602,'17.6ms'],[923,'104.87ms'],[1455,'104.85ms'],[1786,'23.37ms']]];
const bRows=[
 null,
 [661,1192,1721,[[613,'21.76ms'],[856,'77.12ms'],[1121,'31.67ms'],[1387,'77.13ms'],[1649,'31.66ms'],[1771,'23.16ms']]],
 [660,1191,1721,[[612,'21.7ms'],[856,'77.21ms'],[1112,'27.62ms'],[1387,'77.21ms'],[1643,'27.73ms'],[1771,'23.16ms']]],
 [641,1181,1706,[[601,'17.43ms'],[845,'81.07ms'],[1111,'27.23ms'],[1382,'79.31ms'],[1643,'27.66ms'],[1768,'26.26ms']]],
 [661,1193,1723,[[613,'21.78ms'],[856,'77.12ms'],[1122,'31.67ms'],[1387,'77.13ms'],[1649,'31.66ms'],[1771,'23.14ms']]],
 [661,1193,1723,[[613,'21.78ms'],[855,'77.1ms'],[1122,'31.72ms'],[1387,'77.07ms'],[1649,'31.72ms'],[1771,'23.11ms']]],
 [661,1193,1723,[[613,'21.78ms'],[856,'77.13ms'],[1122,'31.66ms'],[1387,'77.13ms'],[1649,'31.67ms'],[1771,'23.13ms']]],
 [661,1193,1723,[[613,'21.81ms'],[856,'77.07ms'],[1122,'31.72ms'],[1387,'77.07ms'],[1649,'31.72ms'],[1771,'23.11ms']]]];
const U=(i)=>{L(413,Y(i)-12.5,555,Y(i)-12.5,'#2c2c2c',1.5);L(555,Y(i)-12.5,555,Y(i),'#3a3a3a',1)};
for(let i=0;i<16;i++)U(i);
for(let i=0;i<8;i++)L(555,Y(i),1837,Y(i),dim[i],wid[i]);
// B0
(()=>{const i=8,y=Y(8),h=hi(8),c='#800000';L(555,y,600,y,'#700000',1.5);L(607,h,1036,h,c,2.5);L(1038,y,1163,y,'#700000',1.5);L(1139,h,1566,h,c,2.5);L(1566,y,1665,y,'#700000',1.5);L(1665,h,1686,h,c,2);L(1665,h,1665,y,c,2);L(1686,h,1686,y,c,2);L(1686,h,1837,h,c,2.5);})();
for(let i=1;i<8;i++){const r=bRows[i],k=i+8,y=Y(k),h=hi(k),c=full[k],d=dim[k],w=wid[k];
 L(555,y,r[0],y,d,w);L(r[0],y,r[0],h,c,w);L(r[0],h,1036,h,c,2);
 L(1038,y,r[1],y,d,w);L(r[1],y,r[1],h,c,w);L(r[1],h,1565,h,c,2);
 L(1567,y,r[2],y,d,w);L(r[2],y,r[2],h,c,w);L(r[2],h,1837,h,c,2);
}
const tc='#d2dae2';
for(let i=0;i<16;i++)T(495,Y(i)-13,'Unknown','#e4e8ec',16.8,'start');
aLab.forEach((r,i)=>r.forEach(l=>T(l[0],Y(i)-10,l[1],tc,17.4)));
[[829,'88.08ms'],[1078,'15.15ms'],[1376,'81.99ms'],[1611,'15.07ms'],[1768,'30.75ms']].forEach(l=>T(l[0],Y(8)-10,l[1],tc,17.4));
for(let i=1;i<8;i++)bRows[i][3].forEach(l=>T(l[0],Y(i+8)-10,l[1],tc,17.4));
trig.forEach((r,i)=>r.forEach(p=>{if(p)P(p[0],p[1],i)}));
// B0 pulses
[[579,585],[600,607],[1111,1116],[1133,1139],[1153,1160],[1163,1170],[1642,1647]].forEach(p=>{R(p[0],hi(8),p[1]-p[0],25.5,'#800000');R(p[0]+1,hi(8)-3,1.5,3,'#800000');R(p[0]+3.5,hi(8)-3,1.5,3,'#800000')});
// B2 / B3 narrow pulses
L(1174,Y(10),1174,hi(10),'#ff8040',2);L(1704,Y(10),1704,hi(10),'#ff8040',2);
R(1172,hi(11)+1,7,24.5,'#ffff00');L(1170.5,Y(11),1170.5,hi(11),'#ffff00',1.5);L(1180.5,Y(11),1180.5,hi(11),'#ffff00',1.5);
// cursors
L(1037,210,1037,727,'#ff0000',2.6);L(1107,210,1107,727,'#ffff00',2.6);L(1566,210,1566,727,'#00ffff',2.6);L(1837,210,1837,727,'#0078ff',2.6);L(412,210,412,727,'#0078ff',1.5);
s+=`<path d="M412 244.300H1893" stroke="#fff" stroke-width="1.500" stroke-dasharray="5 4"/>`;
// markers
const M=(x0,x1,bg,txt,col,lx)=>{R(x0+1,175,x1-x0+1,17,'#333');R(x0,174,x1-x0,17,bg);T((x0+x1)/2,187,txt,col,15,'middle','textLength="'+(txt.length>1?17:9)+'" lengthAdjust="spacingAndGlyphs"');L(lx,191,lx,198,bg,1)};
R(412,174,12,20,'#333');R(412,174,11,19,'#0078ff');T(413,187,'ls','#f08020',13,'start');
M(1030,1045,'#ff0000','T','#40a0a0',1037);M(1099,1115,'#ffff00','A','#2020d0',1107);M(1558,1574,'#00ffff','B','#ff3030',1566);M(1826,1849,'#0078ff','Dp','#f08020',1837);
document.getElementById('wave').innerHTML=s;

/* overview */
s='';
R(25,758,1862,13,'#ece9d8');R(25,771,1868,1,'#333');R(25,772,1862,187,'#000');
L(25,774,1887,774,'#60c8c8',1);L(27.500,774,27.500,958,'#60d8d8',1);L(1887,774,1887,958,'#60d8d8',1);L(25,957.500,1887,957.500,'#60c8c8',1);
R(1887,758,6,201,'#f0f0f0');R(1887,758,6,14,'#000');
const ov=[[813,818.5,'#ff8040','#f07038',1.5,[[395.5,404.5],[1000,1021],[1617,1640]],775],[858,863.5,'#ffff00','#f0f000',1.5,[[404.5,427],[1022,1044],[1641,1662]],820],[905,909.5,'#00ff80','#00b060',1.5,[[427,449.5],[1044,1067],[1663,1685]],865],[950,955,'#0000ff','#0000c0',2,[[451,472],[1069,1090],[1685,1707]],910]];
ov.forEach(o=>{L(28,o[0],395,o[0],'#2c2c2c',1.5);L(395,o[1],1886,o[1],o[3],o[4]);});
[[956,'#ff2020'],[1038,'#c8c800'],[1571.500,'#40e0e0'],[1881,'#0078ff']].forEach(c=>L(c[0],772,c[0],957,c[1],1));
ov.forEach(o=>o[5].forEach(p=>{R(p[0],o[6],p[1]-p[0],o[1]-o[6],o[2])}));
R(27,758,11,13,'#0078ff');T(28,770,'s','#f08020',12,'start');
R(949,759,15,12,'#ff0000');T(956.500,770,'T','#40a0a0',13);
R(1031,759,15,12,'#ffff00');T(1038.500,770,'A','#2020d0',13);
R(1563,759,15,12,'#00ffff');T(1570.500,770,'B','#e03030',13);
R(1876,759,11,12,'#0078ff');T(1881,770,'D','#f08020',13);
document.getElementById('over').innerHTML=s;
</script>
</body>
</html>
